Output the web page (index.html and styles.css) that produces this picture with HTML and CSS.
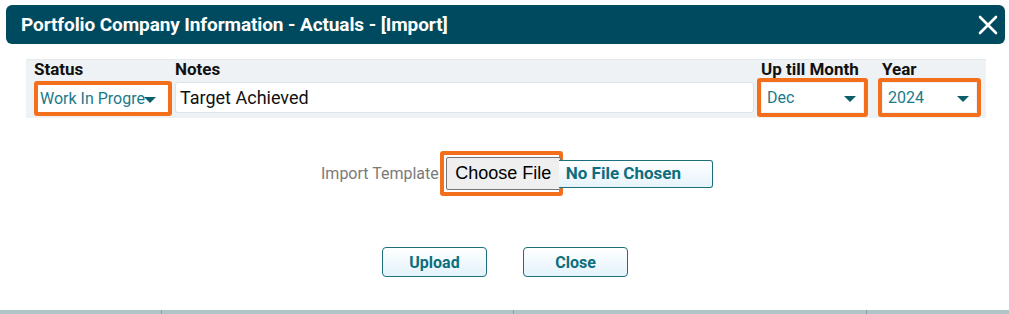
FILE: index.html
```html
<!DOCTYPE html>
<html>
<head>
    <title>Portfolio Company Information - Actuals - [Import]</title>
    <link rel="stylesheet" href="styles.css">
</head>
<body>
    <div class="dialog">
        <div class="dialog-header">
            <div class="dialog-title">Portfolio Company Information - Actuals - [Import]</div>
            <div class="dialog-close">
                <svg width="20" height="20" viewBox="0 0 20 20">
                    <path d="M2 2 L18 18 M18 2 L2 18" stroke="#fff" stroke-width="2.6" stroke-linecap="round"/>
                </svg>
            </div>
        </div>

        <div class="form-row">
            <div class="field field-status">
                <div class="field-label">Status</div>
                <div class="highlight highlight-status">
                    <div class="select">
                        <span class="select-text">Work In Progre</span>
                        <span class="caret tight"></span>
                    </div>
                </div>
            </div>
            <div class="field field-notes">
                <div class="field-label">Notes</div>
                <div class="text-input">Target Achieved</div>
            </div>
            <div class="field field-month">
                <div class="field-label indent">Up till Month</div>
                <div class="highlight">
                    <div class="select">
                        <span class="select-text">Dec</span>
                        <span class="caret"></span>
                    </div>
                </div>
            </div>
            <div class="field field-year">
                <div class="field-label indent">Year</div>
                <div class="highlight">
                    <div class="select">
                        <span class="select-text">2024</span>
                        <span class="caret"></span>
                    </div>
                </div>
            </div>
        </div>

        <div class="import-row">
            <span class="import-label">Import Template</span>
            <div class="highlight highlight-file">
                <button class="file-button">Choose File</button>
            </div>
            <div class="file-name">No File Chosen</div>
        </div>

        <div class="actions">
            <button class="action-button">Upload</button>
            <button class="action-button">Close</button>
        </div>
    </div>

    <div class="backdrop">
        <div class="backdrop-col col-1"></div>
        <div class="backdrop-col col-2"></div>
        <div class="backdrop-col col-3"></div>
        <div class="backdrop-col col-4"></div>
    </div>
</body>
</html>
```

FILE: styles.css
```css
body {
    margin: 0;
    background: #ffffff;
    font-family: Roboto, 'Liberation Sans', Arial, sans-serif;
    overflow: hidden;
}
.dialog {
    height: 310px;
    background: #fff;
    border-radius: 0 0 6px 6px;
    padding-top: 5px;
    box-sizing: border-box;
}
.dialog-header {
    margin: 0 4px 0 6px;
    height: 39px;
    background: #004a5f;
    border-radius: 6px;
    display: flex;
    align-items: center;
    justify-content: space-between;
    padding: 0 7px 0 15px;
}
.dialog-title {
    color: #fff;
    font-weight: bold;
    font-size: 19px;
    letter-spacing: -0.1px;
}
.dialog-close {
    display: flex;
    margin-top: 1px;
}
.form-row {
    margin: 15px 23px 0 26px;
    height: 59px;
    background: #eef2f4;
    border-top: 1px solid #e4e9ec;
    box-sizing: border-box;
    display: flex;
    padding-left: 8px;
}
.field-label {
    font-weight: bold;
    font-size: 17px;
    line-height: 18px;
    color: #111;
    height: 18px;
    white-space: nowrap;
}
.field-label.indent {
    padding-left: 4px;
}
.field-status {
    width: 138px;
}
.field-notes {
    width: 579px;
    margin-left: 3px;
}
.field-month {
    width: 111px;
    margin-left: 3px;
}
.field-year {
    width: 103px;
    margin-left: 10px;
}
.highlight {
    border: 4px solid #f36f1b;
    border-radius: 3px;
    height: 39px;
    box-sizing: border-box;
    padding: 1px;
}
.highlight-status {
    height: 35px;
    margin-top: 3px;
    padding: 0;
}
.select {
    background: #fff;
    height: 100%;
    display: flex;
    align-items: center;
    justify-content: space-between;
    padding: 0 7px 0 5px;
    box-sizing: border-box;
}
.highlight-status .select {
    padding: 0 8px 0 2px;
    justify-content: flex-start;
}
.select-text {
    color: #1b7a8a;
    font-size: 16px;
}
.caret {
    width: 0;
    height: 0;
    border-left: 6px solid transparent;
    border-right: 6px solid transparent;
    border-top: 6px solid #0e5d6b;
    margin-top: 2px;
}
.caret.tight {
    margin-left: -1px;
}
.text-input {
    margin-top: 4px;
    height: 31px;
    background: #fff;
    border: 1px solid #dde3e6;
    border-radius: 3px;
    box-sizing: border-box;
    font-size: 18px;
    line-height: 29px;
    padding-left: 4px;
    color: #111;
}
.import-row {
    display: flex;
    align-items: center;
    margin-top: 33px;
    padding-left: 321px;
    height: 45px;
}
.import-label {
    color: #7a7a7a;
    font-size: 16px;
    margin-right: 1px;
}
.highlight-file {
    height: 45px;
    width: 123px;
    padding: 2px;
}
.file-button {
    width: 115px;
    height: 33px;
    margin: 0;
    background: #efefef;
    border: 1px solid #767676;
    border-radius: 2px;
    font-family: 'Liberation Sans', Arial, sans-serif;
    font-size: 18px;
    color: #000;
    padding: 0;
}
.file-name {
    margin-left: -4px;
    height: 28px;
    width: 154px;
    box-sizing: border-box;
    border: 1px solid #1d6f7c;
    border-left: none;
    border-radius: 0 3px 3px 0;
    background: linear-gradient(#ffffff, #e6f3fb);
    color: #0d6e7d;
    font-weight: bold;
    font-size: 17px;
    line-height: 25px;
    padding-left: 7px;
}
.actions {
    display: flex;
    justify-content: center;
    gap: 36px;
    margin-top: 51px;
    padding-left: 1px;
}
.action-button {
    width: 105px;
    height: 30px;
    border: 1px solid #1d6f7c;
    border-radius: 4px;
    background: linear-gradient(#ffffff, #e3f2fb);
    color: #0d6e7d;
    font-family: Roboto, Arial, sans-serif;
    font-weight: bold;
    font-size: 16px;
    cursor: pointer;
}
.backdrop {
    height: 4px;
    background: #b0c4c8;
    display: flex;
}
.backdrop-col {
    border-right: 1px solid #8aa0a5;
}
.col-1 { width: 161px; }
.col-2 { width: 351px; }
.col-3 { width: 352px; }
.col-4 { flex: 1; border-right: none; }
```
